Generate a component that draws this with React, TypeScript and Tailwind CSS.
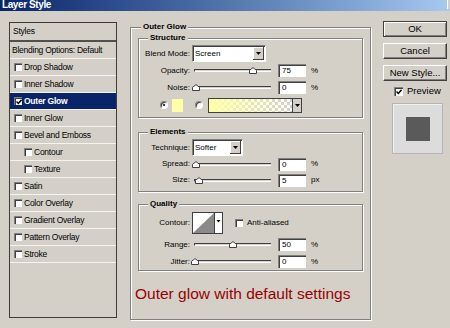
import React from "react";

function Check({ checked, className = "" }: { checked?: boolean; className?: string }) {
  return (
    <span
      className={`flex h-[8px] w-[8px] shrink-0 items-center justify-center border-t border-l border-[#808080] bg-white shadow-[inset_1px_1px_0_#404040] ${className}`}
    >
      {checked && (
        <svg width="6" height="6" viewBox="0 0 6 6">
          <path d="M0.5 2.5L2.3 4.5L5.6 0.8" fill="none" stroke="#000" strokeWidth="1.5" />
        </svg>
      )}
    </span>
  );
}

function Radio({ on }: { on?: boolean }) {
  return (
    <span className="flex h-[8px] w-[8px] shrink-0 items-center justify-center rounded-full border border-[#808080] border-r-white border-b-white bg-white shadow-[inset_1px_1px_0_#404040]">
      {on && <span className="h-[2px] w-[2px] rounded-full bg-black" />}
    </span>
  );
}

function Arrow() {
  return (
    <svg width="5" height="3" viewBox="0 0 5 3">
      <path d="M0 0H5L2.5 3Z" fill="#000" />
    </svg>
  );
}

function Select({ text, w }: { text: string; w: string }) {
  return (
    <div
      className={`ml-[2px] flex h-[17px] ${w} items-center border-t border-l border-[#808080] border-r border-b border-r-white border-b-white bg-white shadow-[inset_1px_1px_0_#404040]`}
    >
      <span className="flex-1 pl-[2px]">{text}</span>
      <span className="mr-[1px] flex h-[13px] w-[11px] items-center justify-center border-r border-b border-[#404040] bg-[#d4d0c8] shadow-[inset_1px_1px_0_#fff]">
        <Arrow />
      </span>
    </div>
  );
}

function Slider({ thumb }: { thumb: string }) {
  return (
    <div className="relative ml-[4px] h-[9px] w-[77px]">
      <div className="absolute top-[3px] right-0 left-0 h-[3px] border-t border-l border-[#404040] border-b border-b-white bg-[#d4d0c8]" />
      <svg className={`absolute top-[1px] ${thumb}`} width="8" height="7" viewBox="0 0 8 7">
        <path d="M0.5 6.5V3.3L4 0.6L7.5 3.3V6.5Z" fill="#fff" stroke="#404040" />
      </svg>
    </div>
  );
}

function Num({ v }: { v: string }) {
  return (
    <div className="ml-[7px] flex h-[13px] w-[28px] items-center border-t border-l border-[#808080] bg-white pl-[3px] shadow-[inset_1px_1px_0_#404040]">
      {v}
    </div>
  );
}

function SliderRow({ label, thumb, v, unit }: { label: string; thumb: string; v: string; unit: string }) {
  return (
    <div className="flex h-[17px] items-center">
      <span className="w-[51px] text-right">{label}</span>
      <Slider thumb={thumb} />
      <Num v={v} />
      <span className="ml-[5px]">{unit}</span>
    </div>
  );
}

function Group({ title, className, left = "left-[9px]", children }: { title: string; className: string; left?: string; children?: React.ReactNode }) {
  return (
    <div className={`relative border border-[#808080] shadow-[inset_1px_1px_0_#fff,1px_1px_0_#fff] ${className}`}>
      <span className={`absolute -top-[6px] ${left} bg-[#d4d0c8] px-[2px] text-[8px] leading-[10px] font-bold`}>{title}</span>
      {children}
    </div>
  );
}

function Button({ label, def }: { label: string; def?: boolean }) {
  return (
    <div
      className={`flex h-[16px] w-[64px] items-center justify-center ${
        def
          ? "border border-[#404040] shadow-[inset_1px_1px_0_#fff,inset_-1px_-1px_0_#808080]"
          : "border border-t-white border-l-white border-r-[#404040] border-b-[#404040] shadow-[inset_-1px_-1px_0_#808080]"
      }`}
    >
      {label}
    </div>
  );
}

const styles = [
  { name: "Drop Shadow" },
  { name: "Inner Shadow" },
  { name: "Outer Glow", checked: true, selected: true },
  { name: "Inner Glow" },
  { name: "Bevel and Emboss" },
  { name: "Contour", sub: true },
  { name: "Texture", sub: true },
  { name: "Satin" },
  { name: "Color Overlay" },
  { name: "Gradient Overlay" },
  { name: "Pattern Overlay" },
  { name: "Stroke" },
];

export default function App() {
  return (
    <div className="h-[328px] w-[450px] overflow-hidden bg-[#d4d0c8] font-['Liberation_Sans',Arial,sans-serif] text-black">
      {/* title bar */}
      <div className="flex h-[11px] items-start justify-between overflow-hidden bg-linear-to-r from-[#0a246a] to-[#a6caf0]">
        <span className="pl-[2px] text-[10px] leading-[10px] font-bold tracking-[-0.4px] text-white">Layer Style</span>
        <span className="h-[9px] w-[3px] border-l border-white bg-[#d4d0c8]" />
      </div>

      <div className="flex items-start pl-[9px]">
        {/* styles list */}
        <div className="mt-[11px] h-[296px] w-[108px] border border-[#3c3c3c] text-[8.5px] tracking-[-0.25px]">
          <div className="flex h-[19px] items-center border-b-2 border-[#505050] pl-[3px]">Styles</div>
          <div className="flex h-[17px] items-center border-b border-[#f4f3ef] pl-[2px]">Blending Options: Default</div>
          {styles.map((s) => (
            <div
              key={s.name}
              className={`flex h-[17px] items-center gap-[2px] border-b border-[#f4f3ef] ${s.sub ? "pl-[14px]" : "pl-[4px]"} ${
                s.selected ? "bg-[#0a246a] font-bold text-white" : ""
              }`}
            >
              <Check checked={s.checked} />
              <span>{s.name}</span>
            </div>
          ))}
        </div>

        {/* settings */}
        <Group title="Outer Glow" left="left-[10px]" className="mt-[16px] ml-[13px] h-[293px] w-[241px] text-[8px]">
          <Group title="Structure" className="mx-[7px] mt-[10px] h-[80px] pt-[6px]">
            <div className="flex h-[17px] items-center">
              <span className="w-[51px] text-right">Blend Mode:</span>
              <Select text="Screen" w="w-[74px]" />
            </div>
            <SliderRow label="Opacity:" thumb="left-[55px]" v="75" unit="%" />
            <SliderRow label="Noise:" thumb="-left-[2px]" v="0" unit="%" />
            <div className="mt-[1px] flex h-[16px] items-center">
              <span className="ml-[21px]">
                <Radio on />
              </span>
              <span className="ml-[4px] h-[13px] w-[11px] bg-[#ffffa8]" />
              <span className="ml-[12px]">
                <Radio />
              </span>
              <div className="ml-[5px] flex h-[15px] w-[94px] border border-[#404040] bg-white">
                <div className="flex-1 bg-[repeating-conic-gradient(#cfcfcf_0%_25%,#ffffff_0%_50%)] bg-size-[6px_6px]">
                  <div className="h-full w-full bg-linear-to-r from-[#ffffa8] to-transparent" />
                </div>
                <span className="flex w-[9px] items-center justify-center border-l border-[#404040] bg-[#d4d0c8]">
                  <Arrow />
                </span>
              </div>
            </div>
          </Group>

          <Group title="Elements" className="mx-[7px] mt-[14px] h-[60px] pt-[6px]">
            <div className="flex h-[17px] items-center">
              <span className="w-[51px] text-right">Technique:</span>
              <Select text="Softer" w="w-[51px]" />
            </div>
            <div className="flex h-[16px] items-center">
              <span className="w-[51px] text-right">Spread:</span>
              <Slider thumb="-left-[2px]" />
              <Num v="0" />
              <span className="ml-[5px]">%</span>
            </div>
            <div className="flex h-[16px] items-center">
              <span className="w-[51px] text-right">Size:</span>
              <Slider thumb="left-[1px]" />
              <Num v="5" />
              <span className="ml-[5px]">px</span>
            </div>
          </Group>

          <Group title="Quality" className="mx-[7px] mt-[12px] h-[67px] pt-[7px]">
            <div className="flex h-[22px] items-center">
              <span className="w-[51px] text-right">Contour:</span>
              <svg className="ml-[2px]" width="31" height="22" viewBox="0 0 31 22">
                <rect x="0.5" y="0.5" width="30" height="21" fill="#fff" stroke="#404040" />
                <path d="M1 21L22 1V21Z" fill="#8a8a8a" />
                <path d="M22.5 1V21" stroke="#404040" />
                <path d="M24.5 8H28.5L26.5 10.5Z" fill="#000" />
              </svg>
              <Check className="ml-[12px]" />
              <span className="ml-[4px]">Anti-aliased</span>
            </div>
            <div className="mt-[2px]">
              <SliderRow label="Range:" thumb="left-[35px]" v="50" unit="%" />
            </div>
            <SliderRow label="Jitter:" thumb="-left-[3px]" v="0" unit="%" />
          </Group>

          <div className="mt-[14px] ml-[4px] text-[15.5px] leading-[18px] text-[#990000]">Outer glow with default settings</div>
        </Group>

        {/* buttons */}
        <div className="mt-[10px] ml-[12px] flex w-[64px] flex-col text-[9.5px]">
          <Button label="OK" def />
          <div className="mt-[6px]">
            <Button label="Cancel" />
          </div>
          <div className="mt-[6px]">
            <Button label="New Style..." />
          </div>
          <div className="mt-[5px] ml-[11px] flex h-[10px] items-center gap-[4px]">
            <Check checked className="h-[9px] w-[9px]" />
            <span>Preview</span>
          </div>
          <div className="mt-[7px] ml-[9px] flex h-[51px] w-[51px] items-center justify-center border border-[#b4b4b4] bg-[#dcdcdc] shadow-[inset_1px_1px_0_#f0f0f0]">
            <span className="h-[24px] w-[24px] bg-[#5a5a5a]" />
          </div>
        </div>
      </div>
    </div>
  );
}
